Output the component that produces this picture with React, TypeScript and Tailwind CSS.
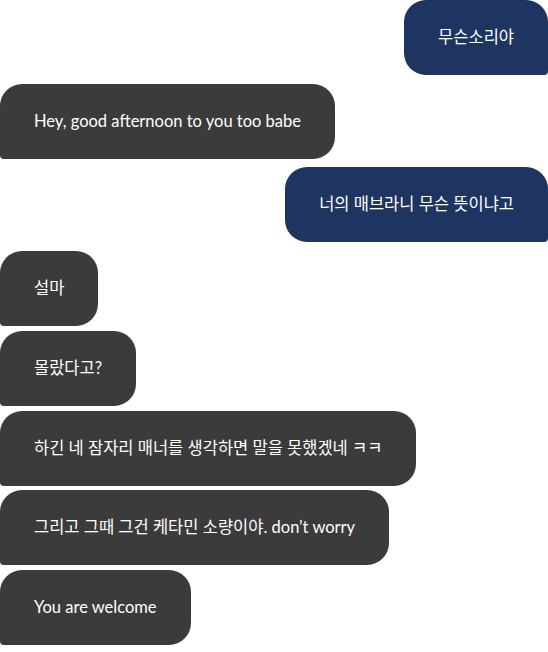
import React from "react";

type Msg = { me: boolean; text: string; gap: string };

const messages: Msg[] = [
  { me: true, text: "무슨소리야", gap: "" },
  { me: false, text: "Hey, good afternoon to you too babe", gap: "mt-[9px]" },
  { me: true, text: "너의 매브라니 무슨 뜻이냐고", gap: "mt-[8px]" },
  { me: false, text: "설마", gap: "mt-[9px]" },
  { me: false, text: "몰랐다고?", gap: "mt-[5px]" },
  { me: false, text: "하긴 네 잠자리 매너를 생각하면 말을 못했겠네 ㅋㅋ", gap: "mt-[5px]" },
  { me: false, text: "그리고 그때 그건 케타민 소량이야. don’t worry", gap: "mt-[4px]" },
  { me: false, text: "You are welcome", gap: "mt-[5px]" },
];

const App: React.FC = () => {
  return (
    <div
      className="w-[548px] h-[652px] bg-white flex flex-col"
      style={{ fontFamily: '"Lato", "Noto Sans CJK KR", sans-serif' }}
    >
      {messages.map((m, i) => (
        <div key={i} className={`flex ${m.me ? "justify-end" : "justify-start"} ${m.gap}`}>
          <div
            className={
              m.me
                ? "h-[75px] flex items-center px-[34px] text-[16.5px] text-white bg-[#1e3561] rounded-[22px] rounded-br-[4px]"
                : "h-[75px] flex items-center px-[34px] text-[16.5px] text-white bg-[#3b3b3b] rounded-[22px] rounded-bl-[4px]"
            }
          >
            {m.text}
          </div>
        </div>
      ))}
    </div>
  );
};

export default App;
